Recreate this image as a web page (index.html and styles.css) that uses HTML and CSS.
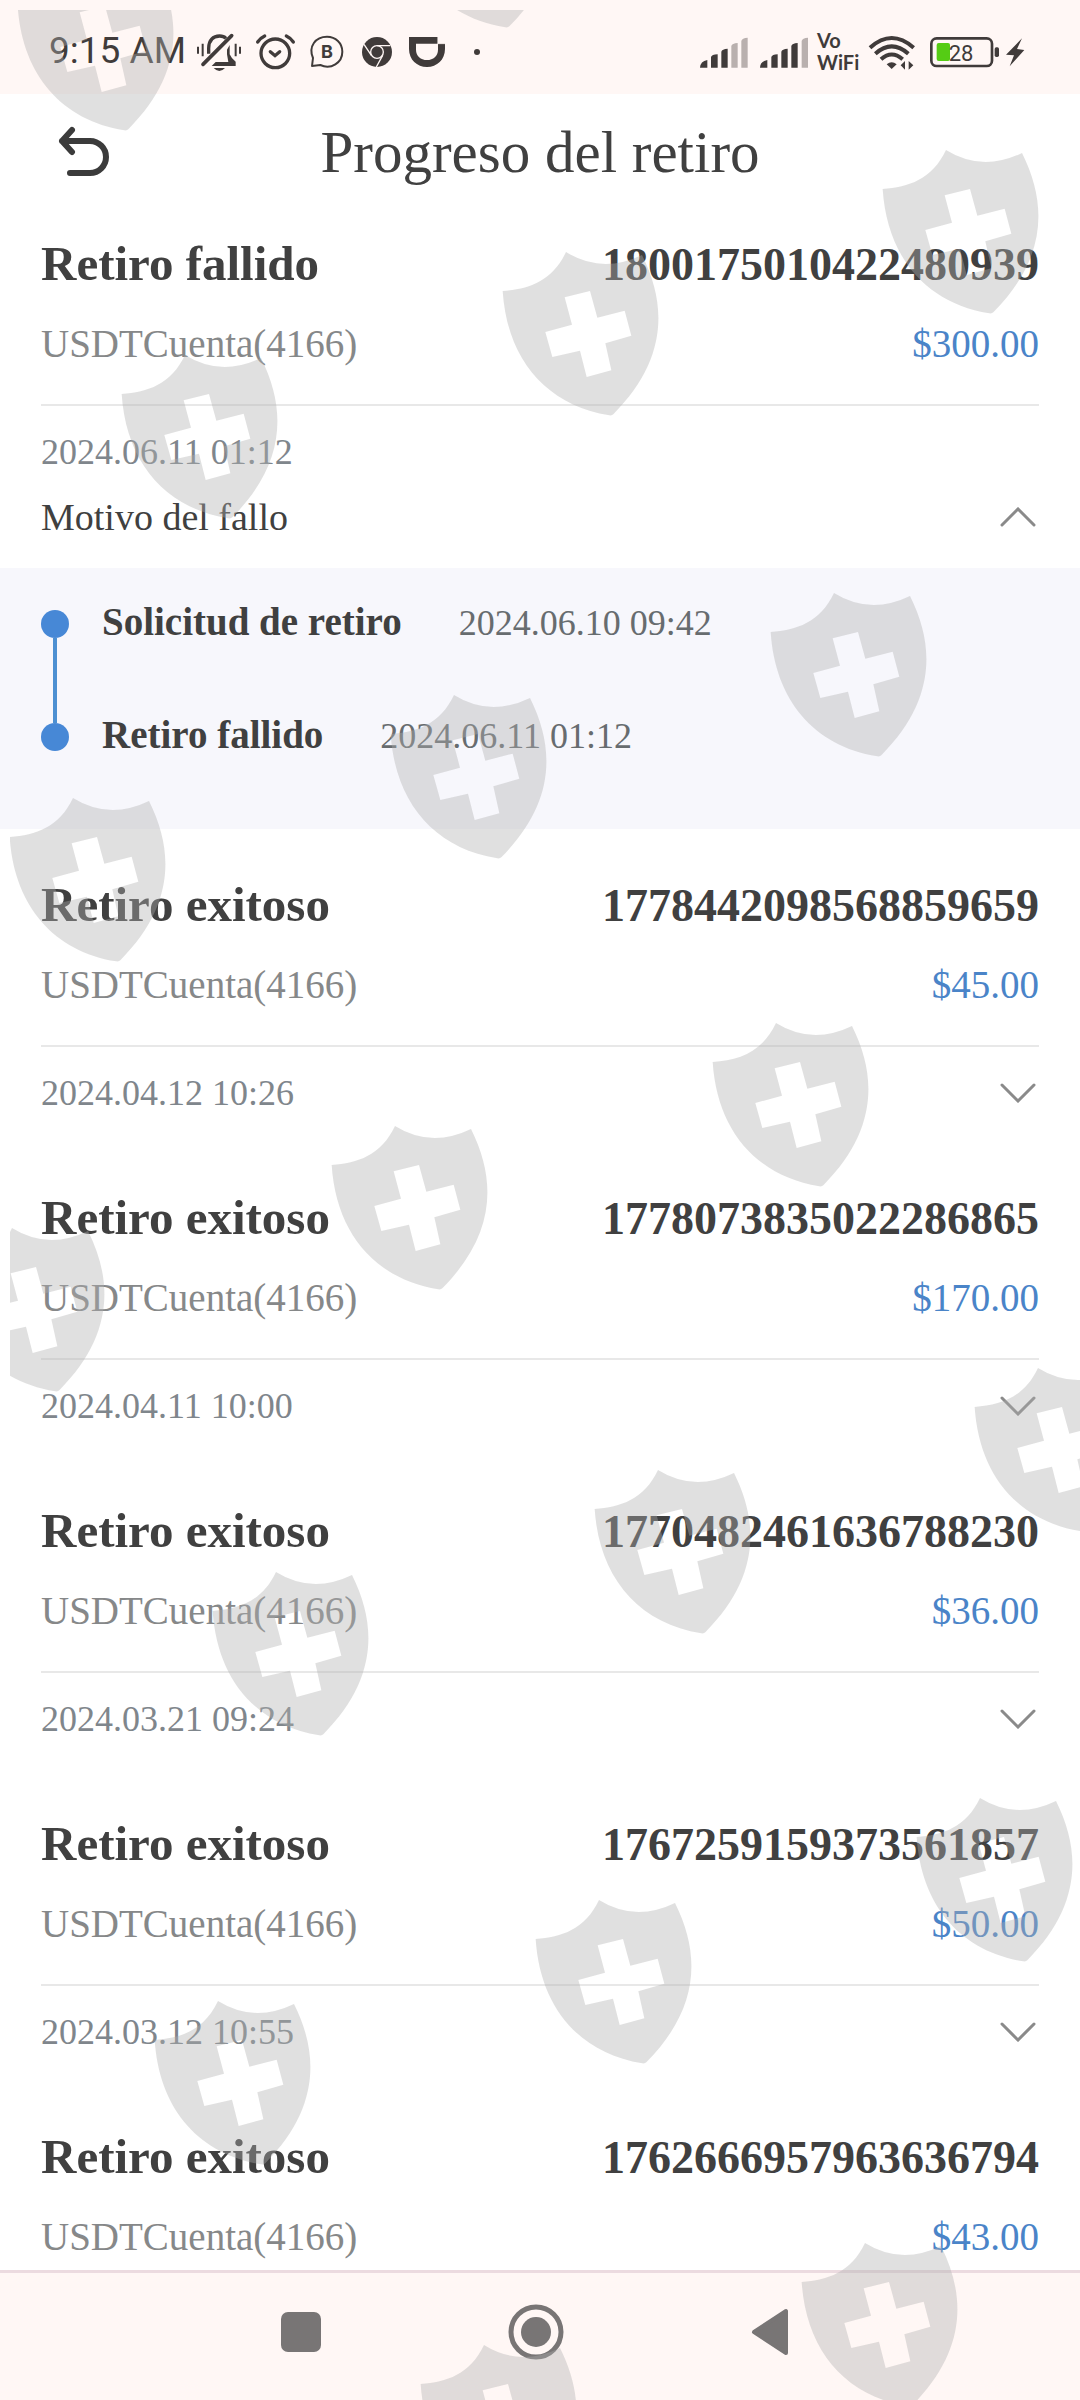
FILE: index.html
```html
<!DOCTYPE html>
<html lang="es">
<head>
<meta charset="utf-8">
<meta name="viewport" content="width=device-width, initial-scale=1">
<title>Progreso del retiro</title>
<link rel="stylesheet" href="styles.css">
</head>
<body>
<svg class="defs" aria-hidden="true">
  <symbol id="down" viewBox="0 0 36 20"><path d="M2 2 18 18 34 2" fill="none" stroke="#8a8a8a" stroke-width="3" stroke-linecap="round"/></symbol>
  <symbol id="up" viewBox="0 0 36 20"><path d="M2 18 18 2 34 18" fill="none" stroke="#8a8a8a" stroke-width="3" stroke-linecap="round"/></symbol>
  <symbol id="shield" viewBox="270 101 474 492"><path fill-rule="evenodd" d="M272 218C350 212 420 190 462 101Q570 168 690 110C770 270 760 430 604 588Q600 592 592 591C400 560 285 420 272 218ZM458 237 480 319 400 341 421 416 504 397 524 476 598 456 580 375 658 352 638 277 556 298 534 218Z"/></symbol>
</svg>

<div class="status">
  <span class="clock">9:15 AM</span>
  <div class="status-left">
    <svg width="46" height="40" viewBox="15 30 138 120" fill="none" stroke="#403b3a" stroke-width="10">
      <path d="M53 98V82C53 58 66 45 86 45Q98 45 105 52" stroke-width="10"/>
      <path d="M36 130 122 44" stroke-width="11" stroke-linecap="round"/>
      <path d="M116 72V100Q122 114 134 122V135H62L74 123H112L108 100V86Z" fill="#403b3a" stroke="none"/>
      <path d="M68 141H102Q85 159 68 141Z" fill="#403b3a" stroke="none"/>
      <path d="M21 77V98M35 68V106M134 68V106M147 77V98" stroke-width="6"/>
    </svg>
    <svg width="41" height="40" viewBox="192 30 123 120" fill="none" stroke="#403b3a" stroke-width="10" stroke-linecap="round">
      <circle cx="253" cy="97" r="43"/>
      <path d="M238 92 252 104 266 92"/>
      <path d="M200 63Q208 51 221 45M307 63Q299 51 286 45"/>
    </svg>
    <svg width="35" height="40" viewBox="354 30 105 120">
      <path d="M363 135 366 111C351 76 374 47 408 47C434 47 454 66 454 92C454 125 420 147 388 132Z" fill="none" stroke="#403b3a" stroke-width="6" stroke-linejoin="round"/>
      <text x="408" y="112" class="badge-letter">B</text>
    </svg>
    <svg width="38" height="40" viewBox="498 30 114 120">
      <circle cx="558" cy="93" r="45" fill="#403b3a"/>
      <circle cx="558" cy="93" r="19" fill="none" stroke="#fff7f5" stroke-width="4"/>
      <path d="M558 74H598M541 103 519 70M575 103 556 138" stroke="#fff7f5" stroke-width="4"/>
    </svg>
    <svg width="40" height="40" viewBox="651 30 120 120">
      <path fill="#403b3a" fill-rule="evenodd" d="M654 48H740V68H762V84C762 116 738 138 708 138C678 138 654 116 654 84ZM675 68V86C675 104 689 117 708 117C727 117 741 104 741 86V68Z"/>
      <path d="M740 68H762M741 48V68" stroke="#fff7f5" stroke-width="2"/>
    </svg>
    <svg width="32" height="40" viewBox="810 30 96 120"><circle cx="858" cy="93" r="9" fill="#403b3a"/></svg>
  </div>
  <div class="status-right">
    <svg width="51" height="40" viewBox="30 30 153 120" fill="#403b3a">
      <path d="M30 140Q31 121 52 117V140ZM63 140V108Q65 101 83 100V140ZM94 140V92Q96 84 113 83V140Z"/>
      <path fill="#b9b0ae" d="M124 140V75Q126 67 143 66V140ZM154 140V60Q156 51 173 50V140Z"/>
    </svg>
    <svg width="48" height="40" viewBox="210 30 144 120" fill="#403b3a">
      <path d="M210 140Q211 121 232 117V140ZM244 140V108Q246 101 263 100V140ZM274 140V92Q276 84 293 83V140ZM304 140V75Q306 67 323 66V140Z"/>
      <path fill="#b9b0ae" d="M335 140V60Q337 51 354 50V140Z"/>
    </svg>
    <span class="vowifi">Vo<br>WiFi</span>
    <svg width="52" height="40" viewBox="537 30 156 120" fill="none" stroke="#403b3a" stroke-width="12">
      <path d="M540 80Q605 22 671 80M556 98Q605 54 655 98M573 115Q605 86 638 115"/>
      <path d="M605 144 590 130Q605 118 620 130Z" fill="#403b3a" stroke="none"/>
      <path d="M645 120V146L632 133ZM656 146V120L670 133Z" fill="#403b3a" stroke="none"/>
    </svg>
    <svg width="69" height="40" viewBox="720 30 207 120">
      <rect x="724" y="52" width="182" height="83" rx="16" fill="none" stroke="#403b3a" stroke-width="8"/>
      <rect x="914" y="79" width="13" height="29" rx="5" fill="#403b3a"/>
      <rect x="740" y="66" width="40" height="54" rx="6" fill="#55cc14"/>
      <text x="813" y="119" class="battery-level">28</text>
    </svg>
    <svg width="16" height="40" viewBox="954 30 48 120"><path d="M996 52 948 101 972 103 959 136 1003 87 981 84Z" fill="#403b3a"/></svg>
  </div>
</div>

<header class="topbar">
  <button class="back" aria-label="Volver">
    <svg width="52" height="52" viewBox="0 0 52 52" fill="none" stroke="#3b3b3b" stroke-width="6" stroke-linecap="round" stroke-linejoin="round"><path d="M14 4 4 15 14 26M4 15H32A16 16 0 0 1 32 47H12"/></svg>
  </button>
  <h1>Progreso del retiro</h1>
</header>

<main>
  <article class="item">
    <div class="row head"><h2>Retiro fallido</h2><span class="order">1800175010422480939</span></div>
    <div class="row account"><span>USDTCuenta(4166)</span><span class="amount">$300.00</span></div>
    <div class="row foot"><time>2024.06.11 01:12</time></div>
    <div class="row reason"><span>Motivo del fallo</span><button class="toggle" aria-label="Contraer"><svg width="36" height="20"><use href="#up"/></svg></button></div>
  </article>
  <ol class="timeline">
    <li><span class="marker"></span><strong>Solicitud de retiro</strong><time>2024.06.10 09:42</time></li>
    <li><span class="marker"></span><strong>Retiro fallido</strong><time>2024.06.11 01:12</time></li>
  </ol>
  <article class="item">
    <div class="row head"><h2>Retiro exitoso</h2><span class="order">1778442098568859659</span></div>
    <div class="row account"><span>USDTCuenta(4166)</span><span class="amount">$45.00</span></div>
    <div class="row foot"><time>2024.04.12 10:26</time><button class="toggle" aria-label="Expandir"><svg width="36" height="20"><use href="#down"/></svg></button></div>
  </article>
  <article class="item">
    <div class="row head"><h2>Retiro exitoso</h2><span class="order">1778073835022286865</span></div>
    <div class="row account"><span>USDTCuenta(4166)</span><span class="amount">$170.00</span></div>
    <div class="row foot"><time>2024.04.11 10:00</time><button class="toggle" aria-label="Expandir"><svg width="36" height="20"><use href="#down"/></svg></button></div>
  </article>
  <article class="item">
    <div class="row head"><h2>Retiro exitoso</h2><span class="order">1770482461636788230</span></div>
    <div class="row account"><span>USDTCuenta(4166)</span><span class="amount">$36.00</span></div>
    <div class="row foot"><time>2024.03.21 09:24</time><button class="toggle" aria-label="Expandir"><svg width="36" height="20"><use href="#down"/></svg></button></div>
  </article>
  <article class="item">
    <div class="row head"><h2>Retiro exitoso</h2><span class="order">1767259159373561857</span></div>
    <div class="row account"><span>USDTCuenta(4166)</span><span class="amount">$50.00</span></div>
    <div class="row foot"><time>2024.03.12 10:55</time><button class="toggle" aria-label="Expandir"><svg width="36" height="20"><use href="#down"/></svg></button></div>
  </article>
  <article class="item last">
    <div class="row head"><h2>Retiro exitoso</h2><span class="order">1762666957963636794</span></div>
    <div class="row account"><span>USDTCuenta(4166)</span><span class="amount">$43.00</span></div>
  </article>
</main>

<nav class="sysnav">
  <button aria-label="Recientes"><svg width="56" height="56" viewBox="0 0 56 56"><rect x="8" y="8" width="40" height="40" rx="7"/></svg></button>
  <button aria-label="Inicio"><svg width="56" height="56" viewBox="0 0 56 56"><circle cx="28" cy="28" r="25" fill="none" stroke="#787575" stroke-width="5"/><circle cx="28" cy="28" r="15"/></svg></button>
  <button aria-label="Atrás"><svg width="56" height="56" viewBox="0 0 56 56"><path d="M11 28 43 7V49Z" stroke="#787575" stroke-width="4" stroke-linejoin="round"/></svg></button>
</nav>

<svg class="watermark" aria-hidden="true">
  <use href="#shield" x="17" y="-33" width="158" height="164"/>
  <use href="#shield" x="398" y="-136" width="158" height="164"/>
  <use href="#shield" x="882" y="150" width="158" height="164"/>
  <use href="#shield" x="502" y="252" width="158" height="164"/>
  <use href="#shield" x="121" y="355" width="158" height="164"/>
  <use href="#shield" x="770" y="593" width="158" height="164"/>
  <use href="#shield" x="390" y="695" width="158" height="164"/>
  <use href="#shield" x="9" y="798" width="158" height="164"/>
  <use href="#shield" x="712" y="1023" width="158" height="164"/>
  <use href="#shield" x="331" y="1126" width="158" height="164"/>
  <use href="#shield" x="-52" y="1228" width="158" height="164"/>
  <use href="#shield" x="974" y="1368" width="158" height="164"/>
  <use href="#shield" x="594" y="1470" width="158" height="164"/>
  <use href="#shield" x="212" y="1572" width="158" height="164"/>
  <use href="#shield" x="916" y="1798" width="158" height="164"/>
  <use href="#shield" x="535" y="1900" width="158" height="164"/>
  <use href="#shield" x="154" y="2001" width="158" height="164"/>
  <use href="#shield" x="801" y="2243" width="158" height="164"/>
  <use href="#shield" x="420" y="2345" width="158" height="164"/>
</svg>
</body>
</html>
```
FILE: styles.css
```css
* { box-sizing: border-box; }

body {
  position: relative;
  display: flex;
  flex-direction: column;
  min-height: 100vh;
  margin: 0;
  background: #fff;
  color: #404040;
  font-family: "Liberation Serif", serif;
  overflow-x: hidden;
}

button {
  display: block;
  margin: 0;
  padding: 0;
  border: 0;
  background: none;
  cursor: pointer;
}

svg { display: block; }

h1, h2 { margin: 0; }

.defs {
  position: absolute;
  width: 0;
  height: 0;
}

/* System status bar */
.status {
  display: flex;
  align-items: center;
  height: 94px;
  padding: 8px 56px 0 49px;
  background: #fff7f5;
}

.status svg { overflow: visible; }

.clock {
  margin-right: 10px;
  color: #403b3a;
  font: 400 37px/48px Roboto, sans-serif;
  white-space: nowrap;
}

.status-left {
  display: flex;
  gap: 13px;
}

.status-right {
  display: flex;
  align-items: center;
  gap: 9px;
  margin-left: auto;
}

.vowifi {
  width: 43px;
  color: #403b3a;
  font: 700 20px/22px Lato, sans-serif;
}

.badge-letter {
  fill: #403b3a;
  font: 700 54px Inter, sans-serif;
  text-anchor: middle;
}

.battery-level {
  fill: #403b3a;
  font: 400 66px Roboto, sans-serif;
  text-anchor: middle;
}

/* Page header */
.topbar {
  display: grid;
  grid-template-columns: 1fr auto 1fr;
  align-items: center;
  height: 94px;
  padding: 22px 58px 0;
}

.back { justify-self: start; }

h1 {
  font-size: 59px;
  font-weight: 400;
  line-height: 72px;
}

main { flex: 1; }

/* Withdrawal entry */
.item { padding: 46px 41px 27px; }

.item.last { padding-bottom: 0; }

.row {
  display: flex;
  justify-content: space-between;
}

.head {
  align-items: baseline;
  height: 60px;
  line-height: 60px;
}

h2 {
  font-size: 49px;
  font-weight: 700;
}

.order {
  font-size: 46px;
  font-weight: 700;
}

.account {
  margin-top: 26px;
  color: #868889;
  font-size: 39px;
  line-height: 48px;
}

.amount { color: #4a84c8; }

.foot {
  align-items: center;
  margin-top: 36px;
  padding-top: 24px;
  border-top: 2px solid #e8e8e8;
  color: #7f868c;
  font-size: 36px;
  line-height: 44px;
}

.reason {
  align-items: center;
  margin-top: 19px;
  font-size: 38px;
  line-height: 48px;
}

.toggle { padding: 0 3px; }

/* Progress steps */
.timeline {
  margin: 0;
  padding: 42px 41px 78px;
  background: #f7f7fc;
  list-style: none;
}

.timeline li {
  display: flex;
  align-items: baseline;
  height: 113px;
  line-height: 24px;
}

.timeline li:last-child { height: 28px; }

.marker {
  display: flex;
  flex-direction: column;
  align-self: stretch;
  align-items: center;
  width: 28px;
  margin-right: 33px;
}

.marker::before {
  content: "";
  flex: none;
  width: 28px;
  height: 28px;
  border-radius: 50%;
  background: #4788d6;
}

.marker::after {
  content: "";
  flex: 1;
  width: 4px;
  background: #4d90d2;
}

.timeline strong {
  margin-right: 57px;
  font-size: 39px;
}

.timeline time {
  color: #676c6f;
  font-size: 36px;
}

/* System navigation */
.sysnav {
  display: flex;
  justify-content: center;
  align-items: center;
  gap: 179px;
  height: 130px;
  padding: 0 8px 9px 0;
  border-top: 3px solid #ecdbe0;
  background: #fff7f5;
  fill: #787575;
}

/* Shield pattern laid over the whole screen */
.watermark {
  position: absolute;
  inset: 0;
  width: 100%;
  height: 100%;
  overflow: hidden;
  clip-path: inset(10px 0 0 10px);
  fill: #afafaf;
  fill-opacity: 0.39;
  pointer-events: none;
}
```
